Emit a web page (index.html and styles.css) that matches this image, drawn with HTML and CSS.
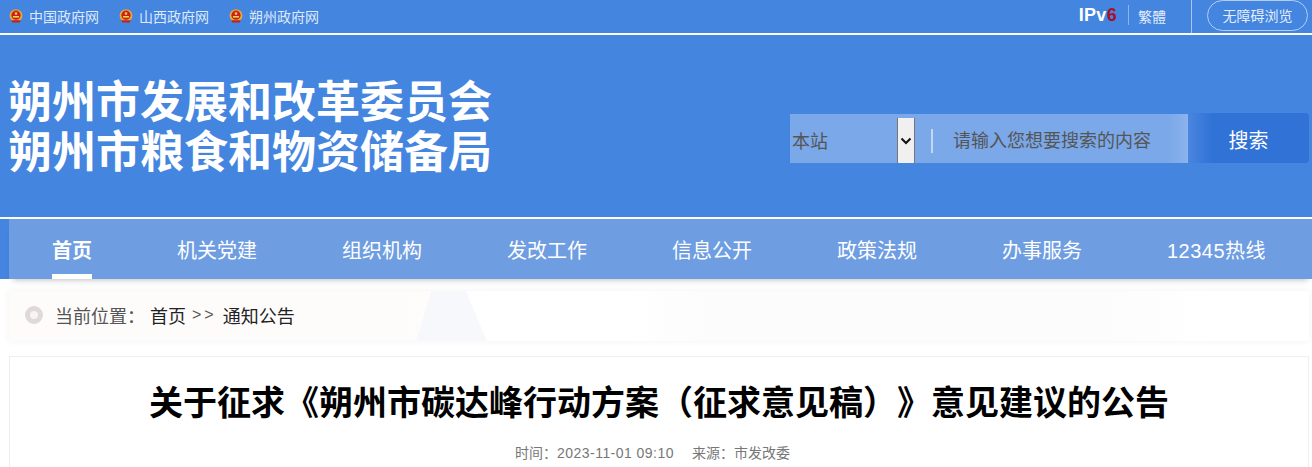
FILE: index.html
```html
<!DOCTYPE html>
<html lang="zh-CN">
<head>
  <meta charset="UTF-8" />
  <title>关于征求《朔州市碳达峰行动方案（征求意见稿）》意见建议的公告</title>
  <link rel="stylesheet" href="styles.css">
</head>
<body>
  <div class="topbar">
    <div class="gov-links">
      <a class="gov-link"><svg class="emblem" viewBox="0 0 14 14"><circle cx="7" cy="6.6" r="6.4" fill="#e8a93a"/><circle cx="7" cy="6.2" r="4.6" fill="#c8201c"/><path d="M7 2.4l.6 1.3 1.3.1-1 .9.3 1.3L7 5.4l-1.2.6.3-1.3-1-.9 1.3-.1z" fill="#f6d24a"/><rect x="4" y="7" width="6" height="1.6" fill="#f6d24a"/><path d="M2.2 11.2h9.6l-1.2 2.4H3.4z" fill="#b5261e"/></svg>中国政府网</a>
      <a class="gov-link"><svg class="emblem" viewBox="0 0 14 14"><circle cx="7" cy="6.6" r="6.4" fill="#e8a93a"/><circle cx="7" cy="6.2" r="4.6" fill="#c8201c"/><path d="M7 2.4l.6 1.3 1.3.1-1 .9.3 1.3L7 5.4l-1.2.6.3-1.3-1-.9 1.3-.1z" fill="#f6d24a"/><rect x="4" y="7" width="6" height="1.6" fill="#f6d24a"/><path d="M2.2 11.2h9.6l-1.2 2.4H3.4z" fill="#b5261e"/></svg>山西政府网</a>
      <a class="gov-link"><svg class="emblem" viewBox="0 0 14 14"><circle cx="7" cy="6.6" r="6.4" fill="#e8a93a"/><circle cx="7" cy="6.2" r="4.6" fill="#c8201c"/><path d="M7 2.4l.6 1.3 1.3.1-1 .9.3 1.3L7 5.4l-1.2.6.3-1.3-1-.9 1.3-.1z" fill="#f6d24a"/><rect x="4" y="7" width="6" height="1.6" fill="#f6d24a"/><path d="M2.2 11.2h9.6l-1.2 2.4H3.4z" fill="#b5261e"/></svg>朔州政府网</a>
    </div>
    <div class="top-tools">
      <span class="ipv6">IPv<b>6</b></span>
      <a class="lang">繁體</a>
      <div class="access-wrap"><a class="access">无障碍浏览</a></div>
    </div>
  </div>

  <header class="masthead">
    <div class="site-name">
      <div>朔州市发展和改革委员会</div>
      <div>朔州市粮食和物资储备局</div>
    </div>
    <form class="search">
      <div class="search-box">
        <div class="scope">
          <span>本站</span>
          <span class="scope-arrow"><svg width="12" height="8" viewBox="0 0 12 8"><path d="M1.5 1.5L6 6l4.5-4.5" fill="none" stroke="#111111" stroke-width="2"/></svg></span>
        </div>
        <span class="divider"></span>
        <span class="placeholder">请输入您想要搜索的内容</span>
      </div>
      <button class="search-btn" type="button">搜索</button>
    </form>
  </header>

  <nav class="nav-wrap">
    <ul class="nav">
      <li class="active"><a>首页</a></li>
      <li><a>机关党建</a></li>
      <li><a>组织机构</a></li>
      <li><a>发改工作</a></li>
      <li><a>信息公开</a></li>
      <li><a>政策法规</a></li>
      <li><a>办事服务</a></li>
      <li><a class="hotline">12345热线</a></li>
    </ul>
  </nav>

  <div class="crumb">
    <span class="crumb-dot"></span>
    <span class="crumb-label">当前位置：</span>
    <a>首页</a>
    <span class="crumb-sep">&gt;&gt;</span>
    <a>通知公告</a>
  </div>

  <main class="article">
    <h1>关于征求《朔州市碳达峰行动方案（征求意见稿）》意见建议的公告</h1>
    <div class="meta">
      <span>时间：<span class="date">2023-11-01 09:10</span></span>
      <span>来源：市发改委</span>
    </div>
  </main>
</body>
</html>
```

FILE: styles.css
```css
* {
  margin: 0;
  padding: 0;
  box-sizing: border-box;
}

body {
  font-family: 'Liberation Sans', 'Noto Sans CJK SC', sans-serif;
  background: #ffffff;
  color: #000000;
  overflow: hidden;
  text-spacing-trim: space-all;
}

/* Top strip */
.topbar {
  height: 35px;
  background: #4485e0;
  border-bottom: 2px solid #ffffff;
  display: flex;
  justify-content: space-between;
  padding-left: 9px;
}

.gov-links {
  display: flex;
  gap: 20px;
}

.gov-link {
  display: flex;
  align-items: center;
  gap: 6px;
  height: 31px;
  font-size: 14px;
  color: #dfe9fa;
}

.emblem {
  width: 14px;
  height: 14px;
}

.top-tools {
  display: flex;
  align-items: center;
  height: 33px;
  padding-right: 4px;
}

.ipv6 {
  font-size: 18px;
  font-weight: 700;
  color: #ffffff;
  padding-right: 11px;
  border-right: 1px solid #8db2ec;
  line-height: 20px;
  margin-top: -3px;
  letter-spacing: 0.3px;
}

.ipv6 b {
  color: #a3122a;
}

.lang {
  font-size: 14px;
  color: #e3ecfb;
  padding-left: 9px;
  width: 62px;
  margin-top: -1px;
}

.access-wrap {
  height: 33px;
  border-left: 1px solid #a9c5f0;
  padding-left: 15px;
}

.access {
  display: block;
  width: 101px;
  height: 31px;
  line-height: 30px;
  border: 1px solid #b5cdf2;
  border-radius: 16px;
  text-align: center;
  font-size: 14px;
  color: #e3ecfb;
}

/* Masthead */
.masthead {
  height: 184px;
  background: #4485e0;
  border-bottom: 2px solid #ffffff;
  display: flex;
  justify-content: space-between;
  padding: 0 3px 0 8px;
}

.site-name {
  font-size: 44px;
  line-height: 50px;
  font-weight: 700;
  color: #ffffff;
  margin-top: 43px;
}

.search {
  display: flex;
  height: 50px;
  margin-top: 78px;
}

.search-box {
  width: 398px;
  height: 49px;
  margin-top: 1px;
  display: flex;
  align-items: center;
  background: linear-gradient(90deg, #7aa8e9 95%, #8cb3ec 100%);
  font-size: 18px;
  color: #555555;
}

.scope {
  width: 125px;
  height: 49px;
  display: flex;
  justify-content: space-between;
  align-items: center;
  padding-left: 2px;
}

.scope > span:first-child {
  padding-top: 3px;
}

.scope-arrow {
  width: 18px;
  height: 45px;
  margin-top: 4px;
  display: flex;
  align-items: center;
  justify-content: center;
  background: #f0f0f0;
  border-left: 1px solid #767676;
  border-right: 1px solid #767676;
}

.divider {
  width: 2px;
  height: 24px;
  background: #c4d8f6;
  margin: 5px 0 0 16px;
}

.placeholder {
  margin: 1px 0 0 20px;
}

.search-btn {
  width: 121px;
  border: none;
  border-radius: 0 4px 4px 0;
  background: linear-gradient(90deg, #4a86de 0%, #3072d6 20%);
  color: #ffffff;
  font-family: inherit;
  font-size: 20px;
  padding-top: 3px;
}

/* Nav */
.nav-wrap {
  height: 60px;
  background: #4485e0;
  padding-left: 9px;
}

.nav {
  height: 60px;
  list-style: none;
  display: flex;
  background: #6e9de2;
  box-shadow: 0 5px 6px -4px rgba(0, 0, 0, 0.25);
  padding-left: 43px;
  gap: 85px;
}

.nav li {
  height: 60px;
  display: flex;
  align-items: center;
  position: relative;
  font-size: 20px;
  color: #ffffff;
}

.nav .active {
  font-weight: 700;
}

.nav .active::after {
  content: '';
  position: absolute;
  left: 0;
  right: 0;
  bottom: 0;
  height: 5px;
  background: #ffffff;
}

.hotline {
  letter-spacing: 0.5px;
}

/* Breadcrumb */
.crumb {
  height: 50px;
  margin: 12px 3px 0 9px;
  padding-bottom: 2px;
  display: flex;
  align-items: center;
  position: relative;
  background: linear-gradient(90deg, #fdfcfb 0, #fdfcfb 400px, #ffffff 480px, #ffffff 620px, #fcfcfc 700px, #fcfcfc 1100px, #ffffff 1200px);
  box-shadow: 0 0 8px rgba(0, 0, 0, 0.05);
  padding-left: 16px;
  font-size: 18px;
  color: #222222;
}

/* faint tower in the banner picture */
.crumb::before {
  content: '';
  position: absolute;
  left: 407px;
  top: 0;
  width: 71px;
  height: 50px;
  background: #f7f8fc;
  clip-path: polygon(22% 0, 70% 0, 100% 100%, 0 100%);
}

.crumb > * {
  position: relative;
}

.crumb-dot {
  width: 18px;
  height: 18px;
  border-radius: 50%;
  border: 5px solid #e0d8da;
  background: #f8f4f5;
  margin-right: 12px;
}

.crumb-label {
  color: #555555;
  margin-right: 5px;
}

.crumb-sep {
  margin: 0 6px;
  font-size: 16px;
  color: #555555;
  letter-spacing: 3px;
}

/* Article */
.article {
  margin: 15px 3px 0 9px;
  border: 1px solid #eeeeee;
  border-bottom: none;
  text-align: center;
  height: 111px;
}

.article h1 {
  font-size: 34px;
  line-height: 46px;
  font-weight: 700;
  color: #000000;
  margin-top: 23px;
}

.meta {
  margin-top: 17px;
  padding-right: 13px;
  font-size: 14px;
  line-height: 20px;
  color: #777777;
  display: flex;
  justify-content: center;
  gap: 18px;
}

.date {
  letter-spacing: 0.46px;
}
```
